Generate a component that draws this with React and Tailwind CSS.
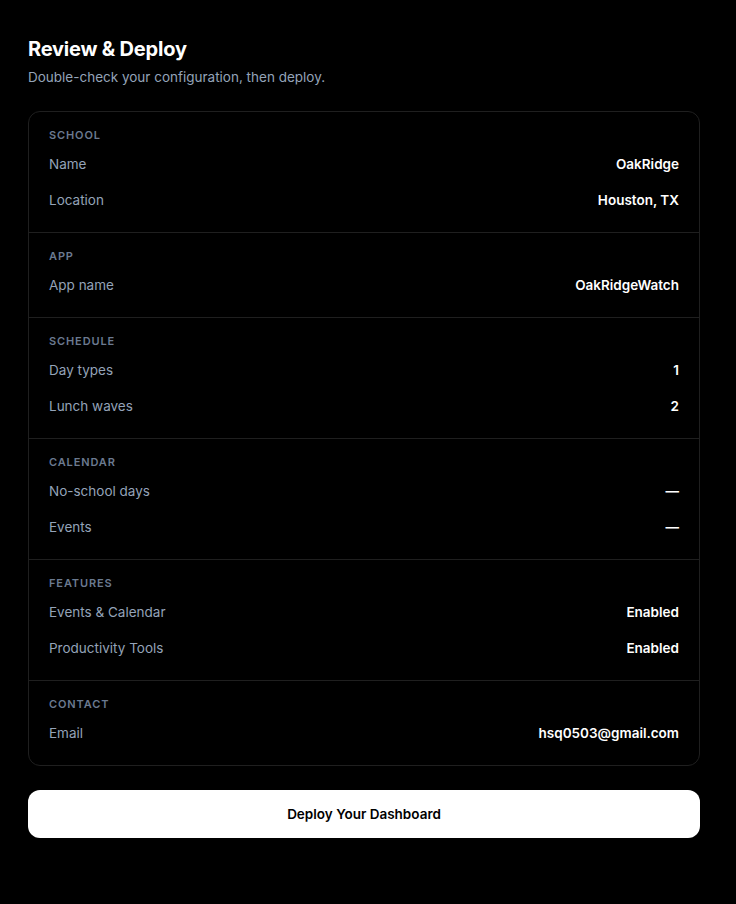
import React from 'react';

const sections = [
  {
    title: 'School',
    rows: [
      { label: 'Name', value: 'OakRidge' },
      { label: 'Location', value: 'Houston, TX' },
    ],
  },
  { title: 'App', rows: [{ label: 'App name', value: 'OakRidgeWatch' }] },
  {
    title: 'Schedule',
    rows: [
      { label: 'Day types', value: '1' },
      { label: 'Lunch waves', value: '2' },
    ],
  },
  {
    title: 'Calendar',
    rows: [
      { label: 'No-school days', value: '—' },
      { label: 'Events', value: '—' },
    ],
  },
  {
    title: 'Features',
    rows: [
      { label: 'Events & Calendar', value: 'Enabled' },
      { label: 'Productivity Tools', value: 'Enabled' },
    ],
  },
  { title: 'Contact', rows: [{ label: 'Email', value: 'hsq0503@gmail.com' }] },
];

function Section({ title, rows }) {
  return (
    <div className="px-5 pt-[15px] pb-[14px] border-b border-[#1f1f1f] last:border-b-0">
      <div className="text-[11px] leading-4 font-semibold uppercase tracking-[0.08em] text-[#6b7a90] mb-[3px]">
        {title}
      </div>
      {rows.map((r) => (
        <div key={r.label} className="flex items-center justify-between h-9 text-[13.5px]">
          <span className="text-[#94a3b8]">{r.label}</span>
          <span className="font-semibold text-white">{r.value}</span>
        </div>
      ))}
    </div>
  );
}

export default function App() {
  return (
    <div className="min-h-[904px] bg-black pl-7 pr-9 pt-[35px] pb-16" style={{ fontFamily: 'Inter, "Liberation Sans", sans-serif' }}>
      <h1 className="text-xl leading-7 font-bold text-white tracking-[-0.01em]">Review &amp; Deploy</h1>
      <p className="mt-1 text-[13.5px] leading-5 text-[#94a3b8]">Double-check your configuration, then deploy.</p>

      <div className="mt-6 rounded-xl border border-[#1f1f1f]">
        {sections.map((s) => (
          <Section key={s.title} {...s} />
        ))}
      </div>

      <button className="mt-6 w-full h-12 rounded-xl bg-white text-[13.5px] font-semibold text-black">
        Deploy Your Dashboard
      </button>
    </div>
  );
}
